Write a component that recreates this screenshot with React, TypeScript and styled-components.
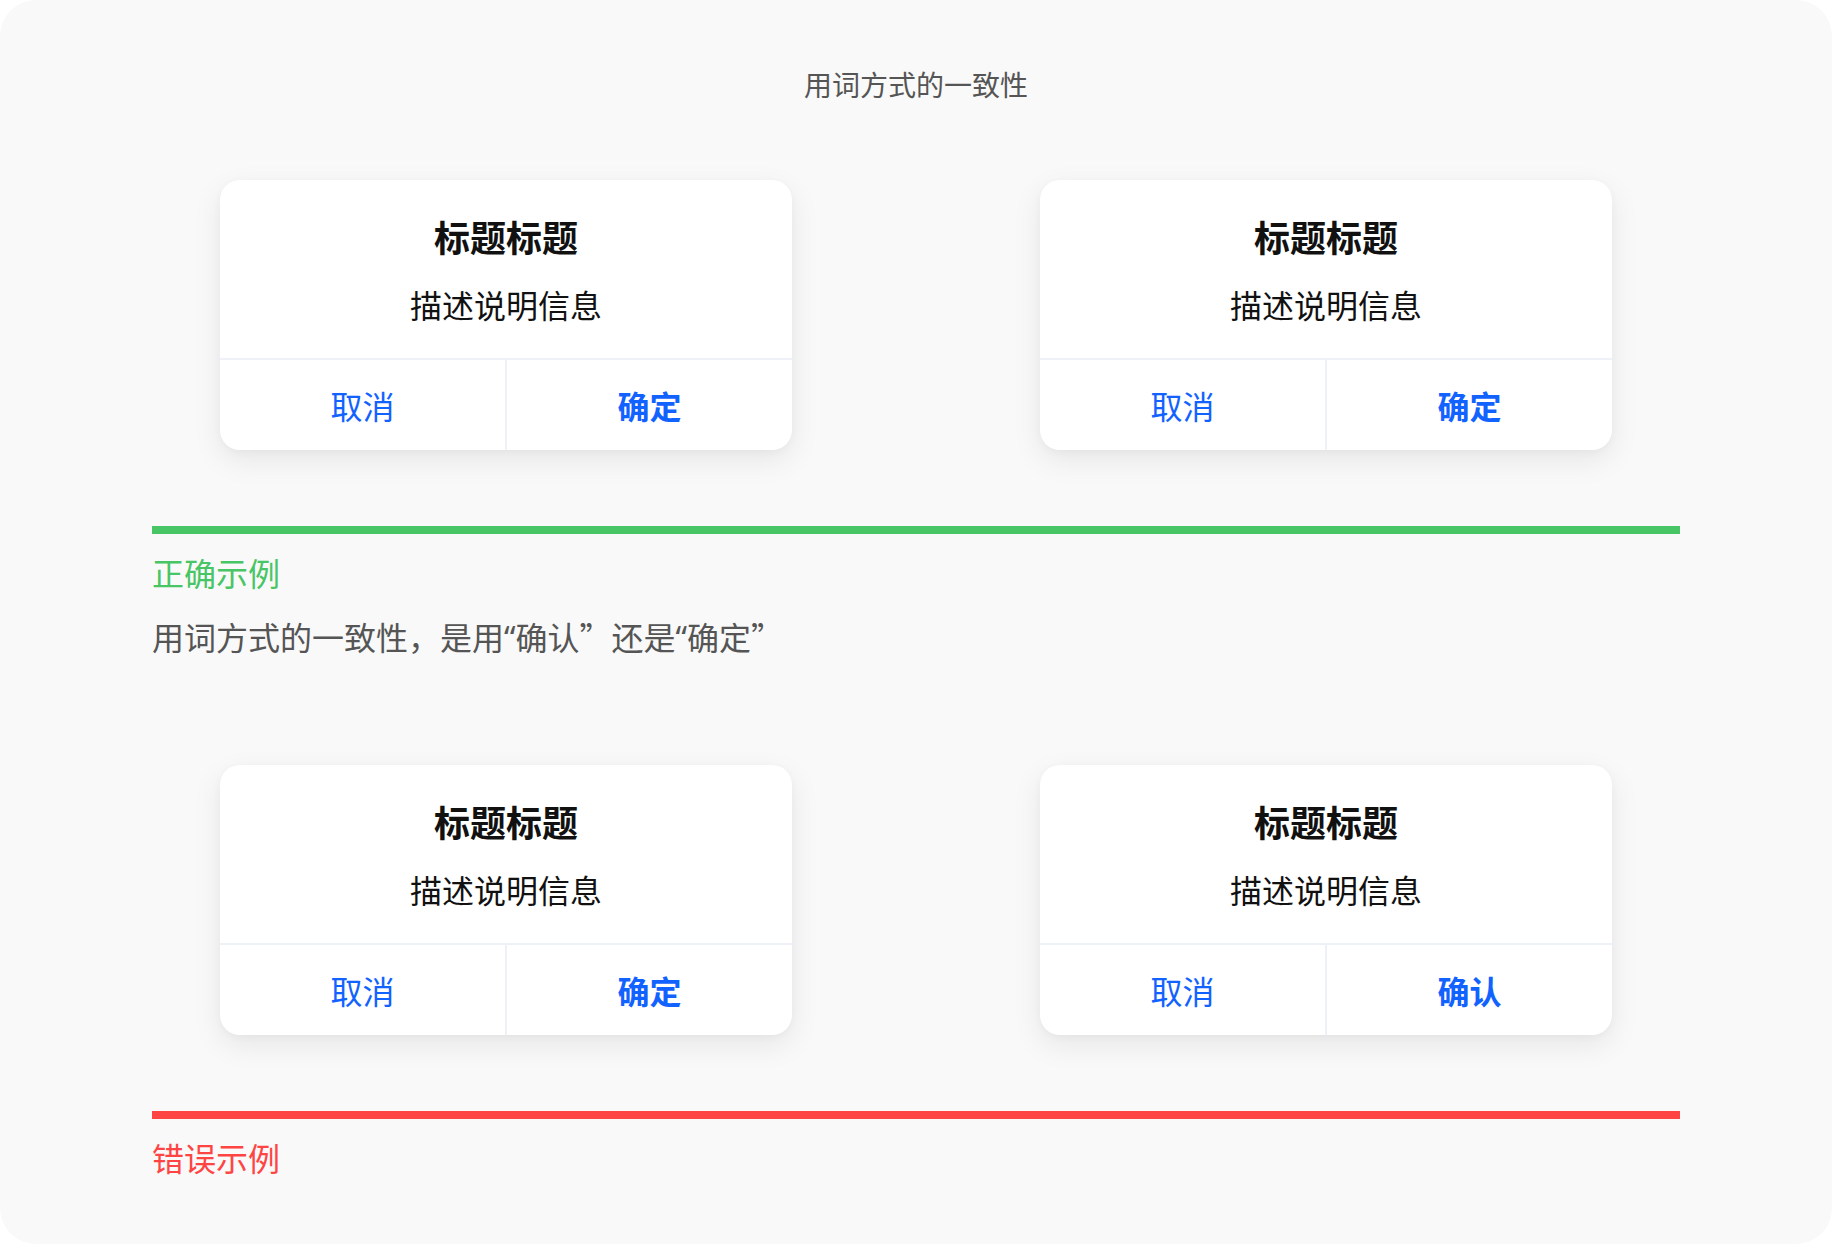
import React from "react";
import styled, { createGlobalStyle } from "styled-components";

const GlobalStyle = createGlobalStyle`
  html, body {
    margin: 0;
    padding: 0;
    background: #ffffff;
  }
  body {
    font-family: "Noto Sans CJK SC", "Noto Sans", sans-serif;
  }
`;

const Page = styled.div`
  width: 1832px;
  height: 1244px;
  box-sizing: border-box;
  background: #f9f9f9;
  border-radius: 36px;
  padding: 64px 152px 0;
  display: flex;
  flex-direction: column;
`;

const PageTitle = styled.div`
  font-size: 28px;
  line-height: 40px;
  color: #555555;
  text-align: center;
  margin-bottom: 76px;
`;

const Section = styled.section<{ $gapAfter: number }>`
  display: flex;
  flex-direction: column;
  margin-bottom: ${(p) => p.$gapAfter}px;
`;

const CardsRow = styled.div`
  display: flex;
  justify-content: center;
  gap: 248px;
  margin-bottom: 76px;
`;

const Card = styled.div`
  width: 572px;
  height: 270px;
  background: #ffffff;
  border-radius: 20px;
  box-shadow: 0 10px 30px rgba(0, 0, 0, 0.08), 0 2px 8px rgba(0, 0, 0, 0.03);
  display: flex;
  flex-direction: column;
  overflow: hidden;
`;

const CardBody = styled.div`
  height: 180px;
  box-sizing: border-box;
  padding-top: 31px;
  display: flex;
  flex-direction: column;
  align-items: center;
  gap: 21px;
  border-bottom: 2px solid #eef1f7;
`;

const CardTitle = styled.div`
  font-size: 36px;
  line-height: 50px;
  font-weight: 700;
  color: #111111;
`;

const CardDesc = styled.div`
  font-size: 32px;
  line-height: 44px;
  color: #111111;
`;

const Actions = styled.div`
  flex: 1;
  display: grid;
  grid-template-columns: 1fr 2px 1fr;
`;

const ActionDivider = styled.div`
  background: #eef1f7;
`;

const Action = styled.div<{ $primary?: boolean }>`
  display: flex;
  align-items: center;
  justify-content: center;
  font-size: 32px;
  line-height: 44px;
  color: #1162ff;
  font-weight: ${(p) => (p.$primary ? 700 : 400)};
`;

const Rule = styled.div<{ $color: string }>`
  height: 8px;
  background: ${(p) => p.$color};
  margin-bottom: 16px;
`;

const Label = styled.div<{ $color: string }>`
  font-size: 32px;
  line-height: 44px;
  color: ${(p) => p.$color};
`;

const Desc = styled.div`
  height: 44px;
  font-size: 32px;
  line-height: 44px;
  color: #555555;
  margin-top: 20px;
  white-space: nowrap;
`;

const OpenQuote = styled.span`
  font-family: "Noto Sans", "DejaVu Sans", sans-serif;
`;

type DialogProps = { confirm: string };

const Dialog = ({ confirm }: DialogProps) => (
  <Card>
    <CardBody>
      <CardTitle>标题标题</CardTitle>
      <CardDesc>描述说明信息</CardDesc>
    </CardBody>
    <Actions>
      <Action>取消</Action>
      <ActionDivider />
      <Action $primary>{confirm}</Action>
    </Actions>
  </Card>
);

export default function App() {
  return (
    <>
      <GlobalStyle />
      <Page>
        <PageTitle>用词方式的一致性</PageTitle>
        <Section $gapAfter={107}>
          <CardsRow>
            <Dialog confirm="确定" />
            <Dialog confirm="确定" />
          </CardsRow>
          <Rule $color="#48c565" />
          <Label $color="#48c565">正确示例</Label>
          <Desc>
            用词方式的一致性，是用<OpenQuote>“</OpenQuote>确认”还是
            <OpenQuote>“</OpenQuote>确定”
          </Desc>
        </Section>
        <Section $gapAfter={0}>
          <CardsRow>
            <Dialog confirm="确定" />
            <Dialog confirm="确认" />
          </CardsRow>
          <Rule $color="#ff4444" />
          <Label $color="#ff4444">错误示例</Label>
        </Section>
      </Page>
    </>
  );
}
